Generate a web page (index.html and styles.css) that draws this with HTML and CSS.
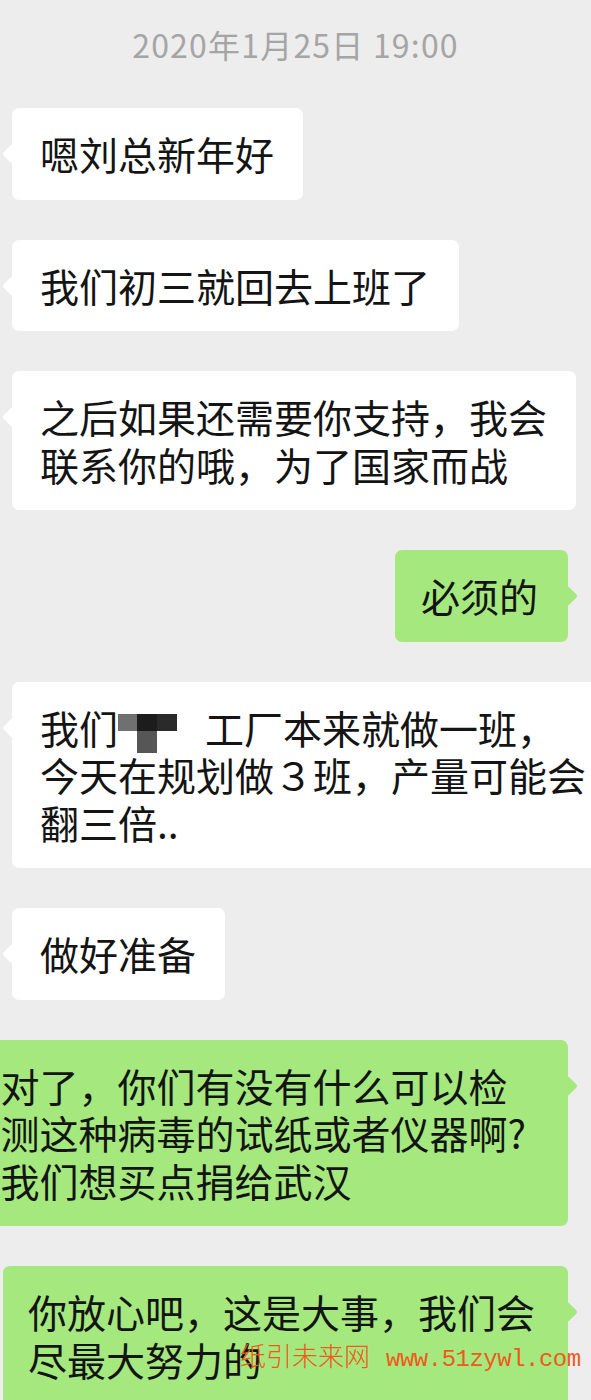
FILE: index.html
```html
<!DOCTYPE html>
<html lang="zh-CN">
<head>
<meta charset="utf-8">
<title>聊天记录</title>
<link rel="stylesheet" href="styles.css">
</head>
<body>
<div class="page">
  <div class="chat">
    <div class="time">2020年1月25日 19:00</div>

    <div class="row left">
      <div class="bubble white">嗯刘总新年好</div>
    </div>

    <div class="row left">
      <div class="bubble white">我们初三就回去上班了</div>
    </div>

    <div class="row left">
      <div class="bubble white">之后如果还需要你支持，我会<br>联系你的哦，为了国家而战</div>
    </div>

    <div class="row right">
      <div class="bubble green">必须的</div>
    </div>

    <div class="row left">
      <div class="bubble white">我们<span class="censor"><i class="c1"></i><i class="c2"></i><i class="c3"></i><i class="c4"></i><i class="c5"></i></span>工厂本来就做一班，<br>今天在规划做３班，产量可能会<br>翻三倍..</div>
    </div>

    <div class="row left">
      <div class="bubble white">做好准备</div>
    </div>

    <div class="row right">
      <div class="bubble green wide-right">对了，你们有没有什么可以检<br>测这种病毒的试纸或者仪器啊?<br>我们想买点捐给武汉</div>
    </div>

    <div class="row right">
      <div class="bubble green tight">你放心吧，这是大事，我们会<br>尽最大努力的</div>
    </div>
  </div>

  <div class="watermark"><span class="wm-cn">纸引未来网</span><span class="wm-en">www.51zywl.com</span></div>
</div>
</body>
</html>
```

FILE: styles.css
```css
html, body {
  margin: 0;
  padding: 0;
}

body {
  background: #ededed;
  width: 591px;
  height: 1400px;
  overflow: hidden;
  font-family: "Noto Sans CJK SC", "Noto Sans", sans-serif;
  color: #141414;
}

.page {
  position: relative;
  width: 591px;
  height: 1400px;
  overflow: hidden;
}

.chat {
  display: flex;
  flex-direction: column;
  gap: 40px;
  padding-top: 24px;
}

.time {
  text-align: center;
  font-size: 32px;
  line-height: 40px;
  color: #a5a5a5;
  margin-bottom: 4px;
  letter-spacing: 1.2px;
}

.row {
  display: flex;
}

.row.left {
  justify-content: flex-start;
  padding-left: 12px;
}

.row.right {
  justify-content: flex-end;
  padding-right: 23px;
}

.bubble {
  position: relative;
  flex-shrink: 0;
  white-space: nowrap;
  font-size: 39px;
  line-height: 47.5px;
  padding: 22px 29px 22px 28px;
  border-radius: 7px;
}

.bubble::before {
  content: "";
  position: absolute;
  top: 39px;
  width: 14px;
  height: 14px;
  transform: rotate(45deg);
  border-radius: 2px;
  background: inherit;
}

.bubble.white {
  background: #ffffff;
}

.bubble.white::before {
  left: -7px;
}

.bubble.green {
  background: #a5e87e;
  padding: 22px 30px 22px 26px;
}

.bubble.green::before {
  right: -7px;
}

.bubble.green.wide-right {
  padding: 22px 42px 22px 28px;
}

.bubble.green.tight {
  padding: 22px 33px 22px 25px;
}

.censor {
  display: inline-grid;
  grid-template-columns: 19px 20px 20px;
  grid-template-rows: 17px 22px;
  width: 87px;
  vertical-align: top;
  margin-top: 10px;
  margin-bottom: -12px;
  filter: blur(0.6px);
}

.censor i {
  display: block;
}

.censor .c1 { background: #707070; }
.censor .c2 { background: #1c1c1c; }
.censor .c3 { background: #2a2a2a; }
.censor .c4 { background: transparent; }
.censor .c5 { background: #565656; }

.watermark {
  position: absolute;
  left: 240px;
  top: 1336px;
  color: #ef5a1c;
  white-space: nowrap;
  line-height: 38px;
}

.wm-cn {
  font-family: "Noto Sans CJK SC", sans-serif;
  font-size: 26px;
  font-weight: 300;
}

.wm-en {
  font-family: "Liberation Mono", monospace;
  font-size: 24px;
  letter-spacing: -0.5px;
  margin-left: 16px;
}
```
